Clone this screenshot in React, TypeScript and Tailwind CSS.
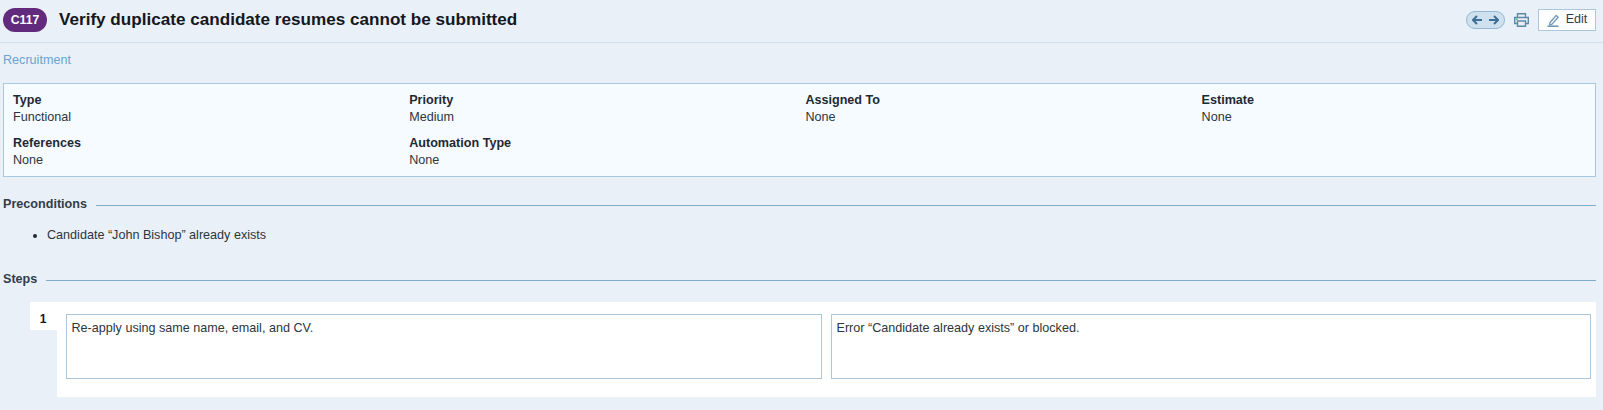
const font = "[font-family:'Liberation_Sans',Arial,sans-serif]";

function Field({ label, value }: { label: string; value: string }) {
  return (
    <div className="h-[43px]">
      <div className="text-[12.6px] leading-[17px] font-bold text-[#1f2933]">{label}</div>
      <div className="text-[12.6px] leading-[17px] text-[#2c3540]">{value}</div>
    </div>
  );
}

function SectionTitle({ title }: { title: string }) {
  return (
    <div className="flex items-center gap-[9px] pl-[3px] pr-[7px]">
      <span className="text-[12.6px] leading-[17px] font-bold text-[#333c47]">{title}</span>
      <div className="h-px flex-1 bg-[#7eadcf] mt-[1px]" />
    </div>
  );
}

export default function App() {
  return (
    <div className={`w-[1603px] h-[410px] overflow-hidden bg-[#e9f0f7] ${font}`}>
      <header className="h-[43px] flex items-center border-b border-[#cfe0ee] pl-[3px] pr-[7px]">
        <span className="h-[24px] w-[44px] rounded-full bg-[#622a7d] text-white text-[12.2px] font-bold flex items-center justify-center mb-[2px]">C117</span>
        <h1 className="ml-[12px] text-[17.12px] font-bold text-[#14181d] mb-[2px]">Verify duplicate candidate resumes cannot be submitted</h1>
        <div className="ml-auto flex items-center mb-[2px]">
          <div className="w-[39px] h-[18px] rounded-full border border-[#93b8d4] bg-[#cfe0ee] flex items-center justify-center gap-[7px] mr-[9px]">
            <svg width="10" height="10" viewBox="0 0 10 10" fill="none" stroke="#3d6f96" strokeWidth="2"><path d="M10 5H1.5M5 1 1 5l4 4" /></svg>
            <svg width="10" height="10" viewBox="0 0 10 10" fill="none" stroke="#3d6f96" strokeWidth="2"><path d="M0 5h8.5M5 1l4 4-4 4" /></svg>
          </div>
          <svg width="15" height="14" viewBox="0 0 15 14" fill="none" stroke="#5d88a8" strokeWidth="1.4" className="mr-[9px]">
            <path d="M3.5 4.5V.7h8v3.8M3.5 10.5H.7V4.5h13.6v6h-2.8" />
            <path d="M3.5 8h8v5.3h-8z" />
            <rect x="1.8" y="5.6" width="1.8" height="1.4" fill="#35b58a" stroke="none" />
          </svg>
          <button className="h-[22px] w-[58px] border border-[#a9c7de] bg-white text-[12.6px] text-[#333c47] flex items-center justify-center gap-[6px] pb-[2px]">
            <svg width="13" height="13" viewBox="0 0 13 13" fill="none" stroke="#6f99b8" className="mt-[2px]"><path strokeWidth="1.3" d="M3 8.5 9.2 1.5l2 1.8L5 10.2l-2.4.6z" /><path strokeWidth="1.6" d="M.5 12.2h11" /></svg>
            Edit
          </button>
        </div>
      </header>

      <div className="h-[40px] pl-[3px] pt-[9px] text-[12.6px] leading-[17px] text-[#6aa3cf]">Recruitment</div>

      <section className="ml-[3px] mr-[7px] h-[94px] border border-[#a9c7de] bg-[#f6fbff] pl-[9px] pt-[8px] grid grid-cols-[repeat(4,396.2px)]">
        <Field label="Type" value="Functional" />
        <Field label="Priority" value="Medium" />
        <Field label="Assigned To" value="None" />
        <Field label="Estimate" value="None" />
        <Field label="References" value="None" />
        <Field label="Automation Type" value="None" />
      </section>

      <div className="mt-[19px]"><SectionTitle title="Preconditions" /></div>
      <ul className="mt-[14px] ml-[47px] list-disc text-[12.6px] leading-[17px] text-[#2c3540] marker:text-[#1f2933]">
        <li>Candidate “John Bishop” already exists</li>
      </ul>

      <div className="mt-[27px]"><SectionTitle title="Steps" /></div>

      <div className="mt-[14px] ml-[30px] mr-[7px] flex">
        <div className="w-[27px] h-[28px] bg-white text-center text-[12px] leading-[35px] font-bold text-[#14181d] pr-[1px]">1</div>
        <div className="flex-1 h-[95px] bg-white pl-[9px] pt-[12px] flex gap-[9px]">
          <div className="w-[756px] h-[65px] border border-[#a9c7de] px-[4.5px] pt-[2px] text-[12.6px] leading-[22px] text-[#2c3540]">Re-apply using same name, email, and CV.</div>
          <div className="w-[760px] h-[65px] border border-[#a9c7de] px-[4.5px] pt-[2px] text-[12.6px] leading-[22px] text-[#2c3540]">Error “Candidate already exists” or blocked.</div>
        </div>
      </div>
    </div>
  );
}
